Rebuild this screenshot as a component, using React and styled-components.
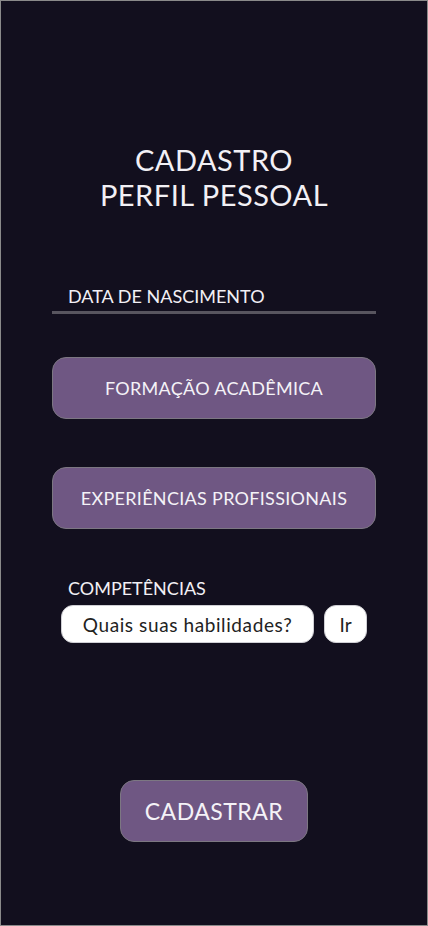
import React from "react";
import styled, { createGlobalStyle } from "styled-components";

const GlobalStyle = createGlobalStyle`
  body {
    margin: 0;
    background: #120f1e;
    font-family: "Lato", "DejaVu Sans", sans-serif;
  }
`;

const Screen = styled.div`
  width: 428px;
  height: 926px;
  box-sizing: border-box;
  border: 1px solid #8a8a8a;
  background: #120f1e;
  color: #f2f0f5;
  display: flex;
  flex-direction: column;
  padding: 141px 51px 0;
`;

const Title = styled.h1`
  margin: 0;
  font-weight: 400;
  font-size: 29px;
  line-height: 35px;
  text-align: center;
  letter-spacing: 0.5px;
`;

const Field = styled.div`
  margin-top: 73px;
  border-bottom: 3px solid #58555f;
  padding: 0 0 4px 16px;
  font-size: 18px;
  line-height: 22px;
`;

const MenuButton = styled.button`
  width: 100%;
  height: 62px;
  margin-top: ${(p) => p.$top}px;
  background: #6f5783;
  border: 1px solid #7c7782;
  border-radius: 14px;
  color: #f4f2f7;
  font-family: inherit;
  font-size: 18px;
  letter-spacing: 0.3px;
`;

const Label = styled.div`
  margin-top: 48px;
  padding-left: 16px;
  font-size: 18px;
  line-height: 22px;
`;

const SearchRow = styled.div`
  display: flex;
  gap: 10px;
  margin-top: 6px;
  padding-left: 9px;
`;

const SearchInput = styled.input`
  width: 253px;
  height: 38px;
  box-sizing: border-box;
  border: 1px solid #cfcfd4;
  border-radius: 12px;
  background: #fff;
  font-family: inherit;
  font-size: 19px;
  letter-spacing: 0.6px;
  color: #222;
  text-align: center;
  padding: 0;
  &::placeholder {
    color: #222;
  }
`;

const GoButton = styled.button`
  width: 43px;
  height: 38px;
  border: 1px solid #cfcfd4;
  border-radius: 12px;
  background: #fff;
  font-family: inherit;
  font-size: 19px;
  color: #222;
  padding: 0;
`;

const SubmitButton = styled(MenuButton)`
  align-self: center;
  width: 188px;
  height: 62px;
  font-size: 23px;
  letter-spacing: 0.5px;
`;

export default function App() {
  return (
    <>
      <GlobalStyle />
      <Screen>
        <Title>
          CADASTRO
          <br />
          PERFIL PESSOAL
        </Title>
        <Field>DATA DE NASCIMENTO</Field>
        <MenuButton $top={43}>FORMAÇÃO ACADÊMICA</MenuButton>
        <MenuButton $top={48}>EXPERIÊNCIAS PROFISSIONAIS</MenuButton>
        <Label>COMPETÊNCIAS</Label>
        <SearchRow>
          <SearchInput placeholder="Quais suas habilidades?" />
          <GoButton>Ir</GoButton>
        </SearchRow>
        <SubmitButton $top={137}>CADASTRAR</SubmitButton>
      </Screen>
    </>
  );
}
